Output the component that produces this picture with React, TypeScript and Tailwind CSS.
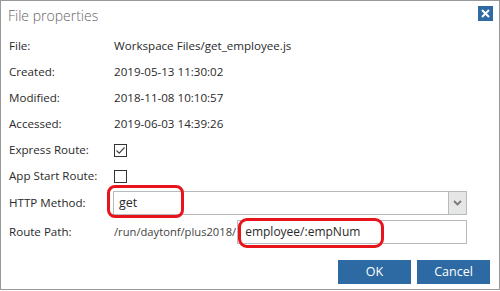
import React from "react";

const rows = [
  { label: "File:", value: "Workspace Files/get_employee.js" },
  { label: "Created:", value: "2019-05-13 11:30:02" },
  { label: "Modified:", value: "2018-11-08 10:10:57" },
  { label: "Accessed:", value: "2019-06-03 14:39:26" },
];

function Checkbox({ checked }: { checked?: boolean }) {
  return (
    <span className="flex h-[13px] w-[13px] items-center justify-center border border-[#333] bg-white">
      {checked && (
        <svg width="11" height="11" viewBox="0 0 11 11">
          <path d="M1.5 5.5 L4.2 8.2 L9.5 2.5" fill="none" stroke="#444" strokeWidth="1.2" />
        </svg>
      )}
    </span>
  );
}

export default function App() {
  return (
    <div className="relative h-[291px] w-[500px] bg-white font-['Open_Sans',sans-serif] text-[#2a2a2a]">
      <div className="flex h-[290px] w-[500px] flex-col border border-[#999]">
        {/* Title bar */}
        <div className="flex h-[32px] items-start justify-between pl-[7px] pr-[6px]">
          <span className="mt-[4px] text-[14px] font-light text-[#666]">File properties</span>
          <button className="mt-[5px] flex h-[15px] w-[15px] items-center justify-center bg-[#2f6aa2]">
            <svg width="9" height="9" viewBox="0 0 9 9">
              <path d="M1 1 L8 8 M8 1 L1 8" stroke="white" strokeWidth="2" />
            </svg>
          </button>
        </div>

        {/* Fields */}
        <div className="flex flex-col pl-[8px] pr-[32px] text-[11.6px]">
          {rows.map((r) => (
            <div key={r.label} className="flex h-[26px] items-center">
              <span className="w-[105px]">{r.label}</span>
              <span>{r.value}</span>
            </div>
          ))}
          <div className="flex h-[26px] items-center">
            <span className="w-[105px]">Express Route:</span>
            <Checkbox checked />
          </div>
          <div className="flex h-[26px] items-center">
            <span className="w-[105px]">App Start Route:</span>
            <Checkbox />
          </div>
          <div className="flex h-[28px] items-center">
            <span className="w-[104px]">HTTP Method:</span>
            <div className="flex h-[24px] flex-1 border border-[#b6bbc0] bg-white">
              <span className="flex flex-1 items-center pl-[5px] text-[12.5px]">get</span>
              <span className="flex w-[18px] items-center justify-center border-l border-[#b6bbc0] bg-[#e6e6e6]">
                <svg width="9" height="6" viewBox="0 0 9 6">
                  <path d="M1 1 L4.5 4.5 L8 1" fill="none" stroke="#777" strokeWidth="1.8" />
                </svg>
              </span>
            </div>
          </div>
          <div className="flex h-[30px] items-center">
            <span className="w-[105px]">Route Path:</span>
            <span className="text-[11.2px] text-[#444]">/run/daytonf/plus2018/</span>
            <div className="ml-[1px] flex h-[24px] flex-1 items-center border border-[#b6bbc0] bg-white pl-[7px] text-[12px]">
              employee/:empNum
            </div>
          </div>
        </div>

        {/* Buttons */}
        <div className="mt-[13px] flex justify-end gap-[6px] pr-[9px]">
          <button className="h-[24px] w-[73px] bg-[#2d6aa3] text-[12.5px] text-white">OK</button>
          <button className="h-[24px] w-[73px] bg-[#2d6aa3] text-[12.5px] text-white">Cancel</button>
        </div>
      </div>

      {/* Red annotation rings */}
      <div className="absolute left-[107px] top-[185px] h-[33px] w-[77px] rounded-[8px] border-[3px] border-[#e8141c]" />
      <div className="absolute left-[238px] top-[218px] h-[30px] w-[146px] rounded-[9px] border-[3px] border-[#e8141c]" />
    </div>
  );
}
